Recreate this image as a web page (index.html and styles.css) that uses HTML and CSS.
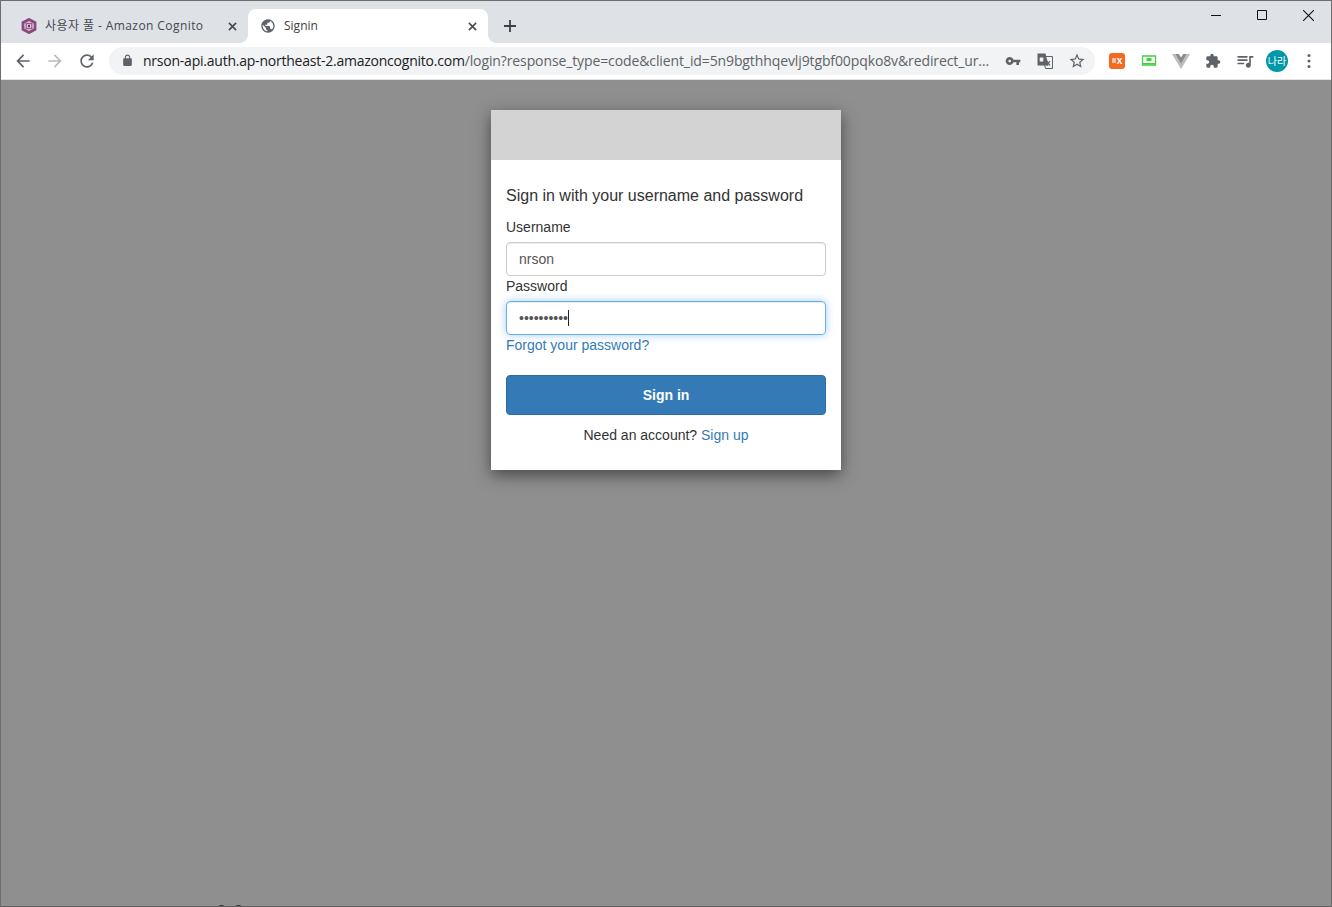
FILE: index.html
```html
<!DOCTYPE html>
<html lang="en">
<head>
<meta charset="utf-8">
<title>Signin</title>
<link rel="stylesheet" href="styles.css">
</head>
<body>
<div class="window">
  <header class="tabstrip">
    <div class="tab">
      <svg class="favicon" viewBox="0 0 16 16"><path class="hex" d="M8 1.400l6 3.300v6.600l-6 3.300-6-3.300V4.700z"/><path class="hex-in" d="M5.200 5.500h5.600v5H5.200z"/><path class="hex-dot" d="M6.900 6.900h2.200v2.200H6.900z"/></svg>
      <span class="tab-title wide">사용자 풀 - Amazon Cognito</span>
      <svg class="tab-close" viewBox="0 0 10 10"><path d="M1 1l8 8M9 1l-8 8"/></svg>
    </div>
    <div class="tab active">
      <svg class="favicon globe" viewBox="0 0 24 24"><path d="M12 2C6.480 2 2 6.480 2 12s4.480 10 10 10 10-4.480 10-10S17.520 2 12 2zm-1 17.930c-3.950-.49-7-3.850-7-7.930 0-.62.08-1.210.21-1.790L9 15v1c0 1.100.9 2 2 2v1.930zm6.900-2.540c-.26-.81-1-1.390-1.900-1.390h-1v-3c0-.55-.45-1-1-1H8v-2h2c.55 0 1-.45 1-1V7h2c1.100 0 2-.9 2-2v-.41c2.930 1.190 5 4.060 5 7.410 0 2.080-.8 3.970-2.100 5.390z"/></svg>
      <span class="tab-title">Signin</span>
      <svg class="tab-close" viewBox="0 0 10 10"><path d="M1 1l8 8M9 1l-8 8"/></svg>
    </div>
    <svg class="newtab" viewBox="0 0 12 12"><path d="M6 0v12M0 6h12"/></svg>
    <div class="winctl">
      <span class="winbtn"><svg viewBox="0 0 10 10"><path d="M0 5.500h10"/></svg></span>
      <span class="winbtn"><svg viewBox="0 0 10 10"><path d="M.5.500h9v9h-9z"/></svg></span>
      <span class="winbtn"><svg viewBox="0 0 10 10"><path d="M0 0l10 10M10 0L0 10"/></svg></span>
    </div>
  </header>

  <nav class="toolbar">
    <span class="tb"><svg class="ic20" viewBox="0 0 24 24"><path d="M20 11H7.830l5.590-5.590L12 4l-8 8 8 8 1.410-1.410L7.830 13H20v-2z"/></svg></span>
    <span class="tb off"><svg class="ic20" viewBox="0 0 24 24"><path d="M4 11h12.170l-5.590-5.590L12 4l8 8-8 8-1.410-1.410L16.170 13H4v-2z"/></svg></span>
    <span class="tb"><svg class="ic20" viewBox="0 0 24 24"><path d="M17.650 6.350C16.200 4.900 14.210 4 12 4c-4.420 0-7.990 3.580-7.990 8s3.570 8 7.990 8c3.730 0 6.840-2.550 7.730-6h-2.080c-.82 2.330-3.040 4-5.650 4-3.310 0-6-2.690-6-6s2.690-6 6-6c1.660 0 3.140.69 4.220 1.780L13 11h7V4l-2.350 2.350z"/></svg></span>
    <div class="omnibox">
      <svg class="lock" viewBox="0 0 24 24"><path d="M18 8h-1V6c0-2.760-2.240-5-5-5S7 3.240 7 6v2H6c-1.100 0-2 .9-2 2v10c0 1.100.9 2 2 2h12c1.100 0 2-.9 2-2V10c0-1.100-.9-2-2-2zM9 6c0-1.660 1.340-3 3-3s3 1.340 3 3v2H9V6z"/></svg>
      <span class="url"><span class="host">nrson-api.auth.ap-northeast-2.amazoncognito.com</span>/login?response_type=code&amp;client_id=5n9bgthhqevlj9tgbf00pqko8v&amp;redirect_ur…</span>
      <span class="tb"><svg class="ic16" viewBox="0 0 24 24"><path d="M12.650 10C11.830 7.670 9.610 6 7 6c-3.310 0-6 2.690-6 6s2.690 6 6 6c2.610 0 4.830-1.670 5.650-4H17v4h4v-4h2v-4H12.650zM7 14c-1.100 0-2-.9-2-2s.9-2 2-2 2 .9 2 2-.9 2-2 2z"/></svg></span>
      <span class="tb"><svg class="ic16" viewBox="0 0 16 16"><path class="tr-back" d="M5.500 3.500h10v12h-7z"/><path d="M.5.500h8l3 12H.5z"/><path class="tr-g" d="M2.700 4.500h3.600v4H2.700z"/><path class="tr-x" d="M10 8l3 4.500M13 8l-3 4.500"/></svg></span>
      <span class="tb"><svg class="ic18" viewBox="0 0 24 24"><path d="M22 9.240l-7.190-.62L12 2 9.190 8.630 2 9.240l5.460 4.730L5.820 21 12 17.270 18.180 21l-1.630-7.030L22 9.240zM12 15.400l-3.760 2.270 1-4.280-3.320-2.880 4.380-.38L12 6.100l1.710 4.040 4.380.38-3.320 2.880 1 4.280L12 15.400z"/></svg></span>
    </div>
    <div class="extensions">
      <span class="tb"><span class="ext-ex"><i class="ex-block"></i>x</span></span>
      <span class="tb"><svg class="ic16" viewBox="0 0 16 16"><path class="green-o" d="M1.500 3h13v9h-13z"/><path class="green-f" d="M5.500 5h5v3h-5zM2 10h12v1.500H2z"/></svg></span>
      <span class="tb"><svg class="ic18" viewBox="0 0 18 18"><path class="v-a" d="M0 2h5.500L9 8l3.500-6H18L9 17z"/><path class="v-b" d="M3.500 2h3.300L9 5.500 11.200 2h3.300L9 11.500z"/></svg></span>
      <span class="tb"><svg class="ic16" viewBox="0 0 24 24"><path d="M20.500 11H19V7c0-1.100-.9-2-2-2h-4V3.500C13 2.120 11.880 1 10.500 1S8 2.120 8 3.500V5H4c-1.100 0-1.990.9-1.990 2v3.800H3.500c1.490 0 2.700 1.210 2.700 2.700s-1.210 2.700-2.700 2.700H2V20c0 1.100.9 2 2 2h3.800v-1.500c0-1.490 1.210-2.700 2.700-2.700 1.490 0 2.700 1.210 2.700 2.700V22H17c1.100 0 2-.9 2-2v-4h1.500c1.380 0 2.500-1.120 2.500-2.500S21.880 11 20.500 11z"/></svg></span>
      <span class="tb"><svg class="ic20" viewBox="0 0 24 24"><path d="M15 6H3v2h12V6zm0 4H3v2h12v-2zM3 16h8v-2H3v2zM17 6v8.180c-.31-.11-.65-.18-1-.18-1.660 0-3 1.340-3 3s1.340 3 3 3 3-1.340 3-3V8h3V6h-5z"/></svg></span>
      <span class="tb"><span class="avatar">나라</span></span>
      <span class="tb"><svg class="ic16" viewBox="0 0 16 16"><circle cx="8" cy="2.500" r="1.500"/><circle cx="8" cy="8" r="1.500"/><circle cx="8" cy="13.500" r="1.500"/></svg></span>
    </div>
  </nav>

  <main class="page">
    <section class="card">
      <div class="banner"></div>
      <form class="form">
        <div class="heading">Sign in with your username and password</div>
        <label class="label">Username</label>
        <div class="field">nrson</div>
        <label class="label">Password</label>
        <div class="field focused"><span>••••••••••</span><i class="caret"></i></div>
        <a class="link forgot">Forgot your password?</a>
        <div class="btn">Sign in</div>
        <p class="signup">Need an account? <a class="link">Sign up</a></p>
      </form>
    </section>
    <i class="speck s1"></i><i class="speck s2"></i>
  </main>
</div>
</body>
</html>
```
FILE: styles.css
```css
* { box-sizing: border-box; }
html, body { margin: 0; height: 100%; }
body { overflow: hidden; background: #8f8f8f; }

.window {
  width: 1332px;
  height: 907px;
  display: flex;
  flex-direction: column;
  border: 1px solid #6e6e6e;
  border-bottom-color: #5e5e5e;
}

/* Tab strip */
.tabstrip {
  height: 42px;
  flex: none;
  display: flex;
  align-items: flex-end;
  background: #dee1e6;
  padding-left: 7px;
}
.tab {
  position: relative;
  width: 240px;
  height: 34px;
  display: flex;
  align-items: center;
  padding: 0 11px 0 12px;
  font: 12px "Open Sans", "Noto Sans CJK KR", sans-serif;
  color: #45494e;
}
.tab.active {
  background: #fff;
  border-radius: 8px 8px 0 0;
  color: #3c4043;
}
.tab.active::before,
.tab.active::after {
  content: "";
  position: absolute;
  bottom: 0;
  width: 8px;
  height: 8px;
}
.tab.active::before {
  left: -8px;
  background: radial-gradient(circle at 0 0, transparent 7.500px, #fff 8px);
}
.tab.active::after {
  right: -8px;
  background: radial-gradient(circle at 100% 0, transparent 7.500px, #fff 8px);
}
.favicon { width: 16px; height: 16px; flex: none; margin-right: 8px; }
.globe { fill: #5f6368; }
.hex { fill: none; stroke: #8b4a7d; stroke-width: 2.800; }
.hex-in { fill: none; stroke: #a8588f; stroke-width: 1.300; }
.hex-dot { fill: #6f2f63; }
.tab:first-child .favicon { margin-left: 1px; }
.tab-title { flex: 1; margin-bottom: 2px; white-space: nowrap; overflow: hidden; }
.wide { letter-spacing: .42px; }
.tab-close {
  width: 9px;
  height: 9px;
  flex: none;
  fill: none;
  stroke: #45494e;
  stroke-width: 1.700;
}
.newtab {
  width: 12px;
  height: 12px;
  margin: 0 0 11px 16px;
  fill: none;
  stroke: #3c4043;
  stroke-width: 1.800;
}
.winctl { margin-left: auto; align-self: flex-start; display: flex; }
.winbtn {
  width: 46px;
  height: 28px;
  display: flex;
  align-items: center;
  justify-content: center;
}
.winbtn svg { width: 10px; height: 10px; fill: none; stroke: #111; stroke-width: 1; }
.winbtn:last-child svg { width: 11px; height: 11px; }

/* Toolbar */
.toolbar {
  height: 37px;
  flex: none;
  display: flex;
  align-items: center;
  background: #fff;
  padding: 0 0 1px 6px;
  border-bottom: 1px solid #e4e4e4;
}
.tb {
  width: 32px;
  height: 28px;
  flex: none;
  display: flex;
  align-items: center;
  justify-content: center;
  fill: #5f6368;
}
.tb.off { fill: #babcbe; }
.ic20 { width: 20px; height: 20px; }
.ic18 { width: 18px; height: 18px; }
.ic16 { width: 16px; height: 16px; }
.omnibox {
  width: 986px;
  height: 28px;
  margin-left: 6px;
  padding-right: 2px;
  display: flex;
  align-items: center;
  background: #f1f3f4;
  border-radius: 14px;
}
.lock { width: 13px; height: 13px; margin-left: 12px; fill: #5f6368; flex: none; }
.url {
  flex: 1;
  margin-left: 9px;
  white-space: nowrap;
  overflow: hidden;
  font: 14px/28px "Open Sans", sans-serif;
  letter-spacing: -.11px;
  color: #5f6368;
}
.host { color: #202124; letter-spacing: -.23px; }
.tr-back { fill: #f1f3f4; stroke: #5f6368; stroke-width: 1; }
.tr-g { fill: #f1f3f4; }
.tr-x { fill: none; stroke: #5f6368; stroke-width: 1.200; }
.extensions { margin-left: 6px; display: flex; align-items: center; }
.ext-ex {
  width: 16px;
  height: 16px;
  border-radius: 3px;
  background: #f26b21;
  color: #fff;
  display: flex;
  align-items: center;
  justify-content: center;
  gap: 1px;
  font: bold 10px/16px "Liberation Sans", sans-serif;
}
.ex-block { width: 4px; height: 5px; background: #fbbf9c; }
.green-o { fill: #fff; stroke: #3fd13f; stroke-width: 1.300; }
.green-f { fill: #3fd13f; }
.v-a { fill: #bdbdbd; }
.v-b { fill: #8a8a8a; }
.avatar {
  width: 22px;
  height: 22px;
  border-radius: 50%;
  background: #0097a7;
  color: #fff;
  text-align: center;
  font: 10px/22px "Noto Sans CJK KR", sans-serif;
}

/* Page */
.page {
  position: relative;
  flex: 1;
  display: flex;
  justify-content: center;
  align-items: flex-start;
  padding-top: 30px;
  background: #8f8f8f;
  overflow: hidden;
}
.card {
  width: 350px;
  background: #fff;
  box-shadow: 0 5px 15px rgba(0, 0, 0, .5);
  font: 14px/20px "Liberation Sans", Arial, sans-serif;
  color: #333;
}
.banner { height: 50px; background: #d3d3d3; }
.form { display: block; padding: 25px 15px; }
.heading { font-size: 16px; line-height: 22px; margin-bottom: 10px; }
.label { display: block; margin-bottom: 5px; }
.field {
  height: 34px;
  padding: 0 12px;
  border: 1px solid #ccc;
  border-radius: 4px;
  line-height: 32px;
  color: #555;
  box-shadow: inset 0 1px 1px rgba(0, 0, 0, .075);
}
.focused {
  display: flex;
  align-items: center;
  border-color: #66afe9;
  box-shadow: inset 0 1px 1px rgba(0, 0, 0, .075), 0 0 8px rgba(102, 175, 233, .6);
}
.caret { width: 1px; height: 16px; background: #222; }
.link { color: #337ab7; }
.forgot { display: block; }
.btn {
  height: 40px;
  margin-top: 20px;
  border: 1px solid #2e6da4;
  border-radius: 4px;
  background: #337ab7;
  color: #fff;
  font-weight: bold;
  line-height: 38px;
  text-align: center;
}
.signup { margin: 10px 0 0; text-align: center; }
.speck {
  position: absolute;
  bottom: -5px;
  width: 7px;
  height: 6px;
  border-radius: 50%;
  background: #333;
}
.s1 { left: 217px; }
.s2 { left: 234px; }
```
